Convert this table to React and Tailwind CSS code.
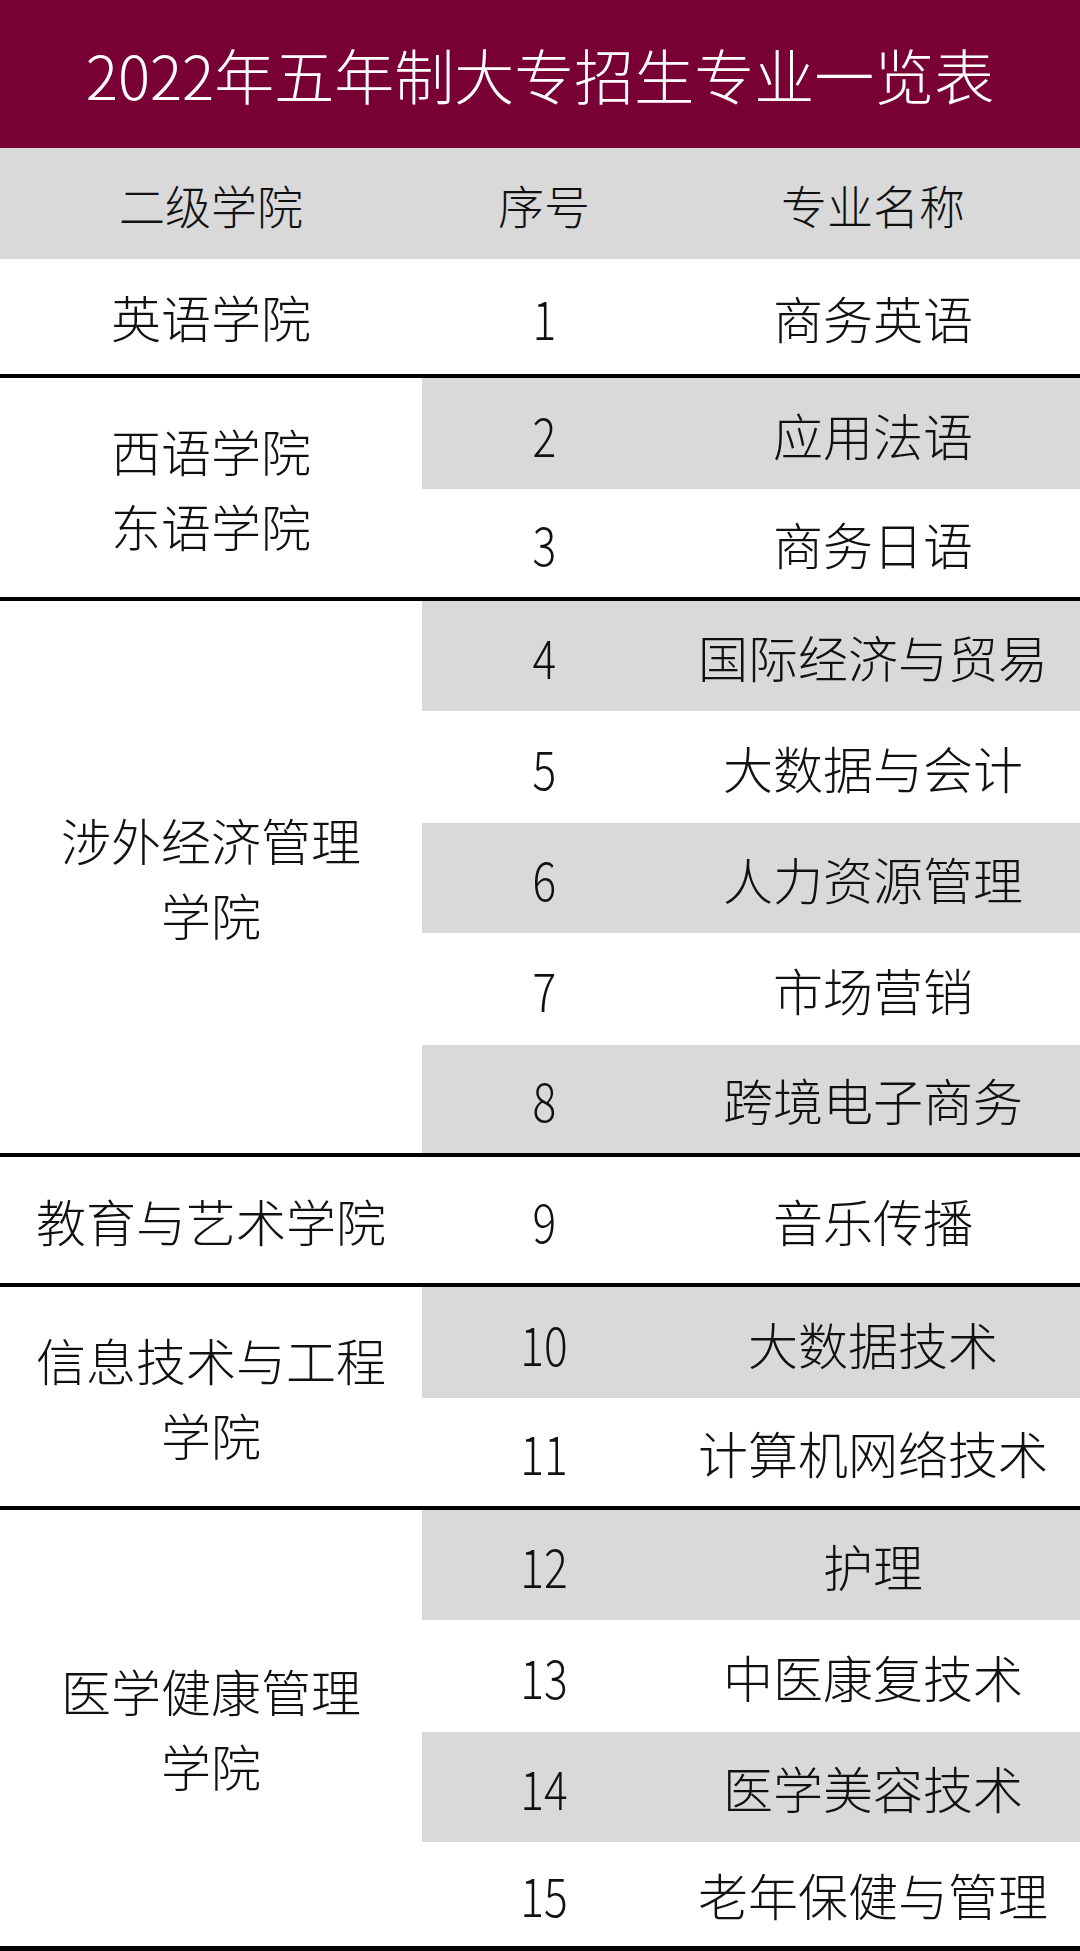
import React from "react";

const groups = [
  {
    name: ["英语学院"],
    rows: [{ n: 1, major: "商务英语", h: "h-[115px]", gray: false }],
  },
  {
    name: ["西语学院", "东语学院"],
    rows: [
      { n: 2, major: "应用法语", h: "h-[111px]", gray: true },
      { n: 3, major: "商务日语", h: "h-[108px]", gray: false },
    ],
  },
  {
    name: ["涉外经济管理", "学院"],
    rows: [
      { n: 4, major: "国际经济与贸易", h: "h-[110px]", gray: true },
      { n: 5, major: "大数据与会计", h: "h-[112px]", gray: false },
      { n: 6, major: "人力资源管理", h: "h-[110px]", gray: true },
      { n: 7, major: "市场营销", h: "h-[112px]", gray: false },
      { n: 8, major: "跨境电子商务", h: "h-[108px]", gray: true },
    ],
  },
  {
    name: ["教育与艺术学院"],
    rows: [{ n: 9, major: "音乐传播", h: "h-[126px]", gray: false }],
  },
  {
    name: ["信息技术与工程", "学院"],
    rows: [
      { n: 10, major: "大数据技术", h: "h-[111px]", gray: true },
      { n: 11, major: "计算机网络技术", h: "h-[108px]", gray: false },
    ],
  },
  {
    name: ["医学健康管理", "学院"],
    rows: [
      { n: 12, major: "护理", h: "h-[110px]", gray: true },
      { n: 13, major: "中医康复技术", h: "h-[112px]", gray: false },
      { n: 14, major: "医学美容技术", h: "h-[110px]", gray: true },
      { n: 15, major: "老年保健与管理", h: "h-[104px]", gray: false },
    ],
  },
];

const cjk = { fontFamily: '"Noto Sans CJK SC", "Noto Sans", sans-serif' };

export default function App() {
  return (
    <div className="w-[1080px] bg-white text-[#111]" style={cjk}>
      {/* 标题 */}
      <div className="h-[148px] bg-[#780034] flex items-center justify-center text-white text-[60px] font-light leading-none">
        2022年五年制大专招生专业一览表
      </div>

      {/* 表头 */}
      <div className="h-[111px] bg-[#d9d9d9] flex text-[46px] font-light leading-none">
        <div className="w-[422px] flex items-center justify-center">二级学院</div>
        <div className="w-[244px] flex items-center justify-center">序号</div>
        <div className="flex-1 flex items-center justify-center">专业名称</div>
      </div>

      {groups.map((g, i) => (
        <div key={i}>
          <div className="flex">
            <div className="w-[422px] flex flex-col items-center justify-center text-[50px] leading-[75px] font-light">
              {g.name.map((line) => (
                <div key={line}>{line}</div>
              ))}
            </div>
            <div className="flex-1 flex flex-col">
              {g.rows.map((r) => (
                <div
                  key={r.n}
                  className={`flex text-[50px] leading-none font-light ${r.h} ${
                    r.gray ? "bg-[#d9d9d9]" : "bg-white"
                  }`}>
                  <div className="w-[244px] flex items-center justify-center">
                    <span className="inline-block text-[54px] scale-x-[0.82]">{r.n}</span>
                  </div>
                  <div className="flex-1 flex items-center justify-center">{r.major}</div>
                </div>
              ))}
            </div>
          </div>
          <div className={i === groups.length - 1 ? "h-[5px] bg-black" : "h-[4px] bg-black"} />
        </div>
      ))}
    </div>
  );
}
